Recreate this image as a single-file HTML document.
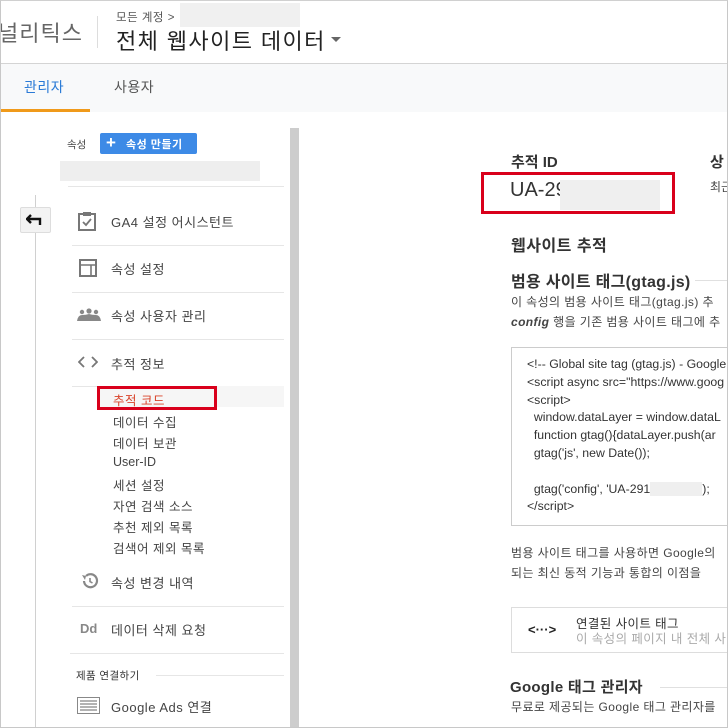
<!DOCTYPE html>
<html><head><meta charset="utf-8">
<style>
*{margin:0;padding:0;box-sizing:border-box}
body{width:728px;height:728px;overflow:hidden;background:#fff;font-family:"Liberation Sans","Noto Sans CJK KR",sans-serif;color:#333;position:relative}
.a{position:absolute;white-space:nowrap}
.frame{position:absolute;left:0;top:0;width:728px;height:728px;border:1px solid #c8c8c8;border-top:1px solid #d0d0d0;pointer-events:none}
.nav{font-size:13px;color:#444;letter-spacing:0.5px}
.hr{position:absolute;height:1px;background:#e6e6e6}
.code{font-family:"Liberation Sans",sans-serif;font-size:12.3px;color:#333;line-height:17.8px}
</style></head><body>
<!-- header -->
<div class="a" style="left:-2px;top:16px;font-size:22px;color:#666;letter-spacing:1px">널리틱스</div>
<div class="a" style="left:97px;top:16px;width:1px;height:32px;background:#ddd"></div>
<div class="a" style="left:116px;top:9px;font-size:11.5px;color:#555;letter-spacing:0.5px">모든 계정 &gt;</div>
<div class="a" style="left:180px;top:3px;width:120px;height:24px;background:#f0f0f0"></div>
<div class="a" style="left:116px;top:24px;font-size:22px;color:#222;letter-spacing:1.4px">전체 웹사이트 데이터</div>
<div class="a" style="left:331px;top:37px;width:0;height:0;border-left:5px solid transparent;border-right:5px solid transparent;border-top:5px solid #666"></div>
<div class="a" style="left:0;top:63px;width:728px;height:1px;background:#d4d4d4"></div>
<!-- tabs -->
<div class="a" style="left:0;top:64px;width:728px;height:48px;background:#f8f9fa"></div>
<div class="a" style="left:24px;top:77px;font-size:14px;color:#2a7ad6;letter-spacing:0.5px">관리자</div>
<div class="a" style="left:114px;top:77px;font-size:14px;color:#555;letter-spacing:0.5px">사용자</div>
<div class="a" style="left:0;top:109px;width:90px;height:3px;background:#f09a1a"></div>
<!-- scrollbar -->
<div class="a" style="left:290px;top:128px;width:9px;height:600px;background:#cdcdcd"></div>
<!-- left panel -->
<div class="a" style="left:35px;top:195px;width:1px;height:533px;background:#d0d0d0"></div>
<div class="a" style="left:20px;top:207px;width:31px;height:26px;background:#f3f3f3;border:1px solid #ddd;border-radius:2px"></div>
<svg class="a" style="left:26px;top:214px" width="18" height="12" viewBox="0 0 18 12"><path d="M5 1 L1 5 L5 9 M1 5 H14 V11" fill="none" stroke="#111" stroke-width="2.4"/></svg>
<div class="a" style="left:67px;top:137px;font-size:10.5px;color:#444">속성</div>
<div class="a" style="left:100px;top:133px;width:97px;height:21px;background:#3d8ae6;border-radius:2px;color:#fff;font-size:11px;font-weight:bold;padding:3px 0 0 26px;letter-spacing:0.5px">속성 만들기</div>
<div class="a" style="left:106px;top:136px;color:#fff;font-size:17px;line-height:14px;font-weight:bold">+</div>
<div class="a" style="left:60px;top:161px;width:200px;height:20px;background:#eeeeee"></div>
<div class="hr" style="left:68px;top:186px;width:216px"></div>
<svg class="a" style="left:78px;top:211px" width="18" height="20" viewBox="0 0 18 20"><rect x="1" y="3" width="16" height="16" fill="none" stroke="#777" stroke-width="2"/><rect x="5" y="1" width="8" height="4" fill="#777"/><path d="M5 11 L8 14 L13 8" fill="none" stroke="#777" stroke-width="1.8"/></svg>
<div class="a nav" style="left:111px;top:212px">GA4 설정 어시스턴트</div>
<div class="hr" style="left:72px;top:245px;width:212px"></div>
<svg class="a" style="left:79px;top:259px" width="18" height="18" viewBox="0 0 18 18"><rect x="1" y="1" width="16" height="16" fill="none" stroke="#777" stroke-width="2"/><path d="M1 6 H17 M12 6 V17" stroke="#777" stroke-width="1.6"/></svg>
<div class="a nav" style="left:111px;top:259px">속성 설정</div>
<div class="hr" style="left:72px;top:292px;width:212px"></div>
<svg class="a" style="left:77px;top:308px" width="24" height="14" viewBox="0 0 24 14"><circle cx="5" cy="4" r="2.2" fill="#888"/><circle cx="12" cy="3" r="2.6" fill="#888"/><circle cx="19" cy="4" r="2.2" fill="#888"/><path d="M0 13 Q1 7 5 7 Q9 7 12 6 Q15 7 19 7 Q23 7 24 13Z" fill="#888"/></svg>
<div class="a nav" style="left:111px;top:306px">속성 사용자 관리</div>
<div class="hr" style="left:72px;top:339px;width:212px"></div>
<svg class="a" style="left:78px;top:356px" width="20" height="12" viewBox="0 0 20 12"><path d="M6 1 L1 6 L6 11 M14 1 L19 6 L14 11" fill="none" stroke="#777" stroke-width="1.8"/></svg>
<div class="a nav" style="left:111px;top:354px">추적 정보</div>
<div class="hr" style="left:72px;top:386px;width:212px"></div>
<div class="a" style="left:97px;top:386px;width:187px;height:21px;background:#f6f6f6"></div>
<div class="a" style="left:97px;top:386px;width:120px;height:24px;border:3px solid #d9001b"></div>
<div class="a" style="left:113px;top:390px;font-size:12.5px;color:#d9442b;letter-spacing:0.5px">추적 코드</div>
<div class="a nav" style="left:113px;top:412px;font-size:12.5px">데이터 수집</div>
<div class="a nav" style="left:113px;top:433px;font-size:12.5px">데이터 보관</div>
<div class="a nav" style="left:113px;top:455px;font-size:12.5px;letter-spacing:0">User-ID</div>
<div class="a nav" style="left:113px;top:475px;font-size:12.5px">세션 설정</div>
<div class="a nav" style="left:113px;top:496px;font-size:12.5px">자연 검색 소스</div>
<div class="a nav" style="left:113px;top:517px;font-size:12.5px">추천 제외 목록</div>
<div class="a nav" style="left:113px;top:538px;font-size:12.5px">검색어 제외 목록</div>
<svg class="a" style="left:81px;top:572px" width="18" height="18" viewBox="0 0 18 18"><path d="M3 9 A6.5 6.5 0 1 0 5 4" fill="none" stroke="#888" stroke-width="2.2"/><path d="M1 3 L5 4 L4 8" fill="#888"/><path d="M9 6 V9.5 L11.5 11" fill="none" stroke="#888" stroke-width="1.6"/></svg>
<div class="a nav" style="left:111px;top:573px">속성 변경 내역</div>
<div class="hr" style="left:72px;top:606px;width:212px"></div>
<div class="a" style="left:80px;top:621px;font-size:13px;font-weight:bold;color:#888">Dd</div>
<div class="a nav" style="left:111px;top:620px">데이터 삭제 요청</div>
<div class="hr" style="left:70px;top:653px;width:214px"></div>
<div class="a" style="left:76px;top:668px;font-size:10.5px;color:#333;letter-spacing:0.4px">제품 연결하기</div>
<div class="hr" style="left:156px;top:675px;width:128px"></div>
<svg class="a" style="left:77px;top:697px" width="23" height="17" viewBox="0 0 23 17"><rect x="0.5" y="0.5" width="22" height="16" fill="none" stroke="#888"/><path d="M3 4 H20 M3 7 H20 M3 10 H20 M3 13 H20" stroke="#999" stroke-width="1.4"/></svg>
<div class="a nav" style="left:111px;top:697px">Google Ads 연결</div>
<!-- right -->
<div class="a" style="left:511px;top:151px;font-size:15px;font-weight:bold;color:#333">추적 ID</div>
<div class="a" style="left:710px;top:151px;font-size:15px;font-weight:bold;color:#333">상</div>
<div class="a" style="left:710px;top:178px;font-size:12px;color:#444">최근</div>
<div class="a" style="left:481px;top:172px;width:194px;height:42px;border:3.5px solid #d9001b"></div>
<div class="a" style="left:510px;top:179px;font-size:20px;color:#333">UA-29</div>
<div class="a" style="left:560px;top:180px;width:100px;height:30px;background:#efefef"></div>
<div class="a" style="left:511px;top:232px;font-size:16px;font-weight:bold;color:#333;letter-spacing:0.5px">웹사이트 추적</div>
<div class="a" style="left:511px;top:268px;font-size:16px;font-weight:bold;color:#333;letter-spacing:0.3px">범용 사이트 태그(gtag.js)</div>
<div class="a" style="left:695px;top:280px;width:33px;height:1px;background:#e0e0e0"></div>
<div class="a" style="left:511px;top:293px;font-size:12px;color:#444;letter-spacing:0.4px">이 속성의 범용 사이트 태그(gtag.js) 추</div>
<div class="a" style="left:511px;top:313px;font-size:12px;color:#444;letter-spacing:0.4px"><b><i>config</i></b> 행을 기존 범용 사이트 태그에 추</div>
<div class="a" style="left:511px;top:347px;width:230px;height:179px;border:1px solid #ccc"></div>
<div class="a code" style="left:527px;top:356px">&lt;!-- Global site tag (gtag.js) - Google<br>&lt;script async src="https://www.goog<br>&lt;script&gt;<br>&nbsp;&nbsp;window.dataLayer = window.dataL<br>&nbsp;&nbsp;function gtag(){dataLayer.push(ar<br>&nbsp;&nbsp;gtag('js', new Date());<br><br>&nbsp;&nbsp;gtag('config', 'UA-291<span style="display:inline-block;width:52px;height:14px;background:#efefef;vertical-align:middle"></span>);<br>&lt;/script&gt;</div>
<div class="a" style="left:511px;top:544px;font-size:12px;color:#444;letter-spacing:0.4px">범용 사이트 태그를 사용하면 Google의</div>
<div class="a" style="left:511px;top:564px;font-size:12px;color:#444;letter-spacing:0.4px">되는 최신 동적 기능과 통합의 이점을</div>
<div class="a" style="left:511px;top:607px;width:230px;height:46px;border:1px solid #ddd"></div>
<div class="a" style="left:528px;top:622px;font-size:13px;font-weight:bold;color:#222">&lt;···&gt;</div>
<div class="a" style="left:576px;top:613px;font-size:12.5px;color:#333;letter-spacing:0.4px">연결된 사이트 태그</div>
<div class="a" style="left:576px;top:628px;font-size:12.5px;color:#aaa;letter-spacing:0.4px">이 속성의 페이지 내 전체 사이</div>
<div class="a" style="left:510px;top:676px;font-size:15px;font-weight:bold;color:#333;letter-spacing:0.3px">Google 태그 관리자</div>
<div class="a" style="left:660px;top:687px;width:68px;height:1px;background:#e0e0e0"></div>
<div class="a" style="left:511px;top:698px;font-size:12px;color:#444;letter-spacing:0.4px">무료로 제공되는 Google 태그 관리자를</div>
<div class="frame"></div>
</body></html>
